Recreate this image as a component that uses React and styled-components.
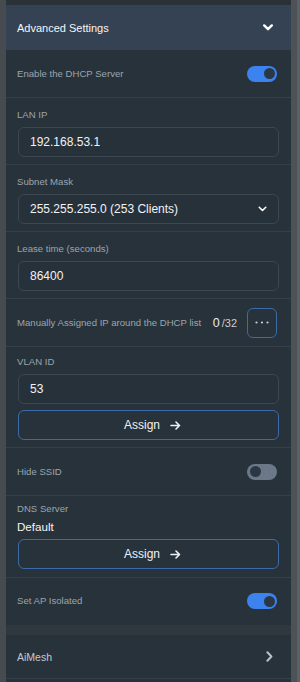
import React from "react";
import styled, { createGlobalStyle } from "styled-components";

const Global = createGlobalStyle`
  html, body { margin: 0; padding: 0; background: #474c50; }
  body { font-family: "Liberation Sans", Arial, sans-serif; }
  * { box-sizing: border-box; }
`;

const Page = styled.div`
  display: flex;
  width: 300px;
  height: 682px;
  overflow: hidden;
  background: #474c50;
`;

const LeftEdge = styled.div`
  width: 6px;
  flex: none;
  background: #464b4f;
`;

const Scrollbar = styled.div`
  width: 9px;
  flex: none;
  background: #4c5256;
  border-right: 3px solid #5b6064;
`;

const Panel = styled.div`
  width: 285px;
  flex: none;
  display: flex;
  flex-direction: column;
  background: #28323b;
`;

const TopBand = styled.div`
  height: 5px;
  flex: none;
  background: #2a3137;
`;

const Header = styled.div`
  height: 45px;
  flex: none;
  display: flex;
  align-items: center;
  justify-content: space-between;
  padding: 0 18px 0 11px;
  background: #344253;
  color: #f4f6f8;
  font-size: 11px;
`;

const Section = styled.div`
  display: flex;
  flex-direction: column;
  flex: none;
  padding: ${(p) => p.$pt ?? 11}px 12px ${(p) => p.$pb ?? 7}px 12px;
  gap: ${(p) => p.$gap ?? 6}px;
  border-bottom: 1px solid #343f49;
`;

const Row = styled.div`
  height: ${(p) => p.$h ?? 48}px;
  display: flex;
  align-items: center;
  padding: 0 14px 0 11px;
  border-bottom: 1px solid ${(p) => (p.$noBorder ? "transparent" : "#343f49")};
  flex: none;
`;

const Label = styled.div`
  font-size: 9.6px;
  line-height: 12px;
  color: #9ba5ae;
  margin-left: -1px;
`;

const RowLabel = styled(Label)`
  flex: 1;
  margin-left: 0;
`;

const Field = styled.div`
  height: 30px;
  display: flex;
  align-items: center;
  justify-content: space-between;
  padding: 0 11px 0 11px;
  border: 1px solid #3c4752;
  border-radius: 6px;
  background: #27313a;
  color: #f1f3f5;
  font-size: 12px;
`;

const Value = styled.div`
  font-size: 11.6px;
  line-height: 14px;
  color: #f3f5f7;
  margin-left: -1px;
`;

const OutlineButton = styled.button`
  height: 30px;
  width: 100%;
  display: flex;
  align-items: center;
  justify-content: center;
  gap: 10px;
  padding: 0 0 0 8px;
  border: 1.5px solid #3a6ba8;
  border-radius: 6px;
  background: transparent;
  color: #eef1f4;
  font-family: inherit;
  font-size: 12px;
`;

const DotsButton = styled.button`
  width: 30px;
  height: 30px;
  flex: none;
  display: flex;
  align-items: center;
  justify-content: center;
  border: 1.5px solid #3a6ba8;
  border-radius: 6px;
  background: transparent;
  padding: 0;
`;

const Counter = styled.div`
  display: flex;
  align-items: baseline;
  gap: 2px;
  margin-right: 10px;
  color: #e9ecef;
`;

const CountBig = styled.span`
  font-size: 12.5px;
`;

const CountSmall = styled.span`
  font-size: 11px;
  color: #c9ced3;
`;

const Toggle = styled.div`
  width: 30px;
  height: 16px;
  flex: none;
  border-radius: 8px;
  background: ${(p) => (p.$on ? "#3d83ef" : "#6b7888")};
  display: flex;
  align-items: center;
  justify-content: ${(p) => (p.$on ? "flex-end" : "flex-start")};
  padding: 0 2.5px;
`;

const Knob = styled.div`
  width: 11px;
  height: 11px;
  border-radius: 50%;
  background: #2b3843;
`;

const GapBand = styled.div`
  height: 10px;
  flex: none;
  background: #30383f;
`;

const NavRow = styled.div`
  height: 44px;
  flex: none;
  display: flex;
  align-items: center;
  justify-content: space-between;
  padding: 0 18px 0 11px;
  border-bottom: 1px solid #343f49;
  color: #c3c9ce;
  font-size: 10.5px;
`;

const Filler = styled.div`
  flex: 1;
`;

const ChevronDown = ({ w = 10, h = 7, sw = 2.4, color = "#fff" }) => (
  <svg width={w} height={h} viewBox="0 0 10 7" fill="none">
    <path d="M1.2 1.4 L5 5.2 L8.8 1.4" stroke={color} strokeWidth={sw} strokeLinecap="round" strokeLinejoin="round" />
  </svg>
);

const ChevronRight = () => (
  <svg width="7" height="11" viewBox="0 0 7 11" fill="none">
    <path d="M1.4 1.2 L5.4 5.5 L1.4 9.8" stroke="#b9c0c7" strokeWidth="2" strokeLinecap="round" strokeLinejoin="round" />
  </svg>
);

const Arrow = () => (
  <svg width="11" height="9" viewBox="0 0 11 9" fill="none">
    <path d="M1 4.5 H9.5 M6 1 L9.5 4.5 L6 8" stroke="#eef1f4" strokeWidth="1.6" strokeLinecap="round" strokeLinejoin="round" />
  </svg>
);

const Dots = () => (
  <svg width="14" height="3" viewBox="0 0 14 3">
    <circle cx="1.5" cy="1.5" r="1.1" fill="#c9d0d7" />
    <circle cx="7" cy="1.5" r="1.1" fill="#c9d0d7" />
    <circle cx="12.5" cy="1.5" r="1.1" fill="#c9d0d7" />
  </svg>
);

const SwitchRow = ({ label, on, noBorder, h }) => (
  <Row $noBorder={noBorder} $h={h}>
    <RowLabel>{label}</RowLabel>
    <Toggle $on={on}>
      <Knob />
    </Toggle>
  </Row>
);

export default function App() {
  return (
    <>
      <Global />
      <Page>
        <LeftEdge />
        <Panel>
          <TopBand />
          <Header>
            <span>Advanced Settings</span>
            <ChevronDown />
          </Header>
          <SwitchRow label="Enable the DHCP Server" on />
          <Section>
            <Label>LAN IP</Label>
            <Field>192.168.53.1</Field>
          </Section>
          <Section>
            <Label>Subnet Mask</Label>
            <Field>
              <span>255.255.255.0 (253 Clients)</span>
              <ChevronDown w={9} h={6} sw={1.8} />
            </Field>
          </Section>
          <Section>
            <Label>Lease time (seconds)</Label>
            <Field>86400</Field>
          </Section>
          <Row>
            <RowLabel>Manually Assigned IP around the DHCP list</RowLabel>
            <Counter>
              <CountBig>0</CountBig>
              <CountSmall>/32</CountSmall>
            </Counter>
            <DotsButton>
              <Dots />
            </DotsButton>
          </Row>
          <Section $pt={9} $pb={7}>
            <Label>VLAN ID</Label>
            <Field>53</Field>
            <OutlineButton>
              <span>Assign</span>
              <Arrow />
            </OutlineButton>
          </Section>
          <SwitchRow label="Hide SSID" />
          <Section $pt={7} $pb={8} $gap={5}>
            <Label>DNS Server</Label>
            <Value>Default</Value>
            <OutlineButton>
              <span>Assign</span>
              <Arrow />
            </OutlineButton>
          </Section>
          <SwitchRow label="Set AP Isolated" on noBorder h={47} />
          <GapBand />
          <NavRow>
            <span>AiMesh</span>
            <ChevronRight />
          </NavRow>
          <Filler />
        </Panel>
        <Scrollbar />
      </Page>
    </>
  );
}
